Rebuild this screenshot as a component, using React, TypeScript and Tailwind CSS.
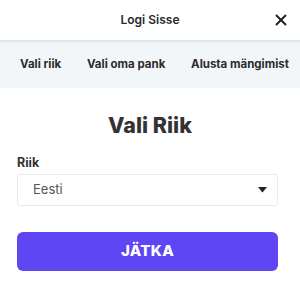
import { X } from 'lucide-react';

export default function App() {
  return (
    <div className="w-[300px] h-[300px] bg-white text-[#333] font-['Inter',sans-serif] overflow-hidden">
      <div className="relative h-[41px] flex items-center justify-center border-b border-[#dfe3e8] shadow-[0_1px_2px_rgba(0,0,0,0.08)]">
        <span className="text-[12px] font-semibold text-[#2b2b2b]">Logi Sisse</span>
        <button className="absolute right-[10px] top-[11px] text-[#222]">
          <X className="w-[18px] h-[18px]" strokeWidth={2.6} />
        </button>
      </div>
      <div className="h-[47px] bg-[#f3f6f9] flex items-center justify-between pl-[20px] pr-[11px]">
        <span className="text-[11.5px] font-bold text-[#2b2b2b]">Vali riik</span>
        <span className="text-[11.5px] font-bold text-[#2b2b2b]">Vali oma pank</span>
        <span className="text-[11.5px] font-bold text-[#2b2b2b]">Alusta mängimist</span>
      </div>
      <div className="px-[17px] pt-[23px]">
        <h1 className="text-center text-[21.5px] font-extrabold text-[#333] leading-[28px]">Vali Riik</h1>
        <label className="block mt-[16px] text-[12.5px] font-bold text-[#333] leading-[16px]">Riik</label>
        <div className="mt-[3px] h-[32px] w-[261px] border border-[#e6eaee] rounded-[3px] flex items-center justify-between pl-[15px] pr-[10px]">
          <span className="text-[13px] text-[#555]">Eesti</span>
          <svg width="9" height="6" viewBox="0 0 9 6">
            <path d="M0 0 H9 L4.5 5.5 Z" fill="#222" />
          </svg>
        </div>
        <button className="mt-[26px] w-[261px] h-[39px] rounded-[6px] bg-[#5f46f5] text-white text-[15px] font-extrabold tracking-[0.3px]">
          JÄTKA
        </button>
      </div>
    </div>
  );
}
